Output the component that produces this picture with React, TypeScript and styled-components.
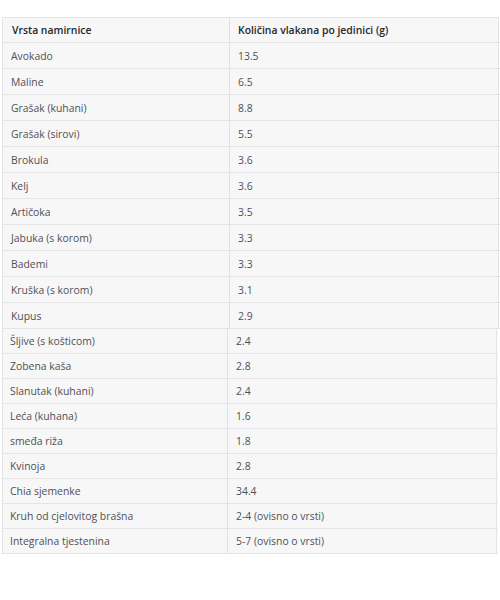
import React from "react";
import styled, { createGlobalStyle } from "styled-components";

const Global = createGlobalStyle`
  html, body { margin: 0; padding: 0; background: #ffffff; }
  body { font-family: "Open Sans", "Noto Sans", "Liberation Sans", sans-serif; }
`;

const Page = styled.div`
  padding: 17px 0 0 2px;
  width: 500px;
  box-sizing: border-box;
`;

const Table = styled.div<{ $w: number; $c1: number; $rh: number }>`
  display: grid;
  grid-template-columns: ${(p) => p.$c1}px ${(p) => p.$w - p.$c1}px;
  grid-auto-rows: ${(p) => p.$rh}px;
  width: ${(p) => p.$w}px;
  background: #f7f7f8;
  border-left: 1px solid #e4e4e6;
  border-right: 1px solid #e4e4e6;
  box-sizing: border-box;
`;

const Cell = styled.div<{ $head?: boolean; $first?: boolean; $pad: number }>`
  display: flex;
  align-items: center;
  padding-left: ${(p) => p.$pad}px;
  font-size: 10.4px;
  font-weight: ${(p) => (p.$head ? 600 : 400)};
  color: ${(p) => (p.$head ? "#26262a" : "#505056")};
  border-bottom: 1px solid #e4e4e6;
  border-right: ${(p) => (p.$first ? "1px solid #e1e1e3" : "none")};
  box-sizing: border-box;
  white-space: nowrap;
`;

const HeadRow = styled.div`
  display: contents;
`;

const TopTable = styled(Table)`
  border-top: 1px solid #e4e4e6;
  grid-template-rows: 25px;
`;

const BottomTable = styled(Table)`
  box-shadow: 0 1px 2px rgba(0, 0, 0, 0.06);
`;

const top: [string, string][] = [
  ["Avokado", "13.5"],
  ["Maline", "6.5"],
  ["Grašak (kuhani)", "8.8"],
  ["Grašak (sirovi)", "5.5"],
  ["Brokula", "3.6"],
  ["Kelj", "3.6"],
  ["Artičoka", "3.5"],
  ["Jabuka (s korom)", "3.3"],
  ["Bademi", "3.3"],
  ["Kruška (s korom)", "3.1"],
  ["Kupus", "2.9"],
];

const bottom: [string, string][] = [
  ["Šljive (s košticom)", "2.4"],
  ["Zobena kaša", "2.8"],
  ["Slanutak (kuhani)", "2.4"],
  ["Leća (kuhana)", "1.6"],
  ["smeđa riža", "1.8"],
  ["Kvinoja", "2.8"],
  ["Chia sjemenke", "34.4"],
  ["Kruh od cjelovitog brašna", "2-4 (ovisno o vrsti)"],
  ["Integralna tjestenina", "5-7 (ovisno o vrsti)"],
];

export default function App() {
  return (
    <Page>
      <Global />
      <TopTable $w={497} $c1={227} $rh={26}>
        <HeadRow>
          <Cell $head $first $pad={9}>Vrsta namirnice</Cell>
          <Cell $head $pad={8}>Količina vlakana po jedinici (g)</Cell>
        </HeadRow>
        {top.map(([a, b]) => (
          <React.Fragment key={a}>
            <Cell $first $pad={8}>{a}</Cell>
            <Cell $pad={8}>{b}</Cell>
          </React.Fragment>
        ))}
      </TopTable>
      <BottomTable $w={495} $c1={225} $rh={25}>
        {bottom.map(([a, b]) => (
          <React.Fragment key={a}>
            <Cell $first $pad={7}>{a}</Cell>
            <Cell $pad={8}>{b}</Cell>
          </React.Fragment>
        ))}
      </BottomTable>
    </Page>
  );
}
